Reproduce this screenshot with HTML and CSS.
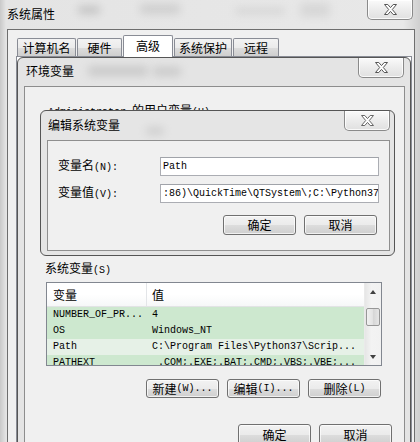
FILE: index.html
```html
<!DOCTYPE html>
<html>
<head>
<meta charset="utf-8">
<title>系统属性</title>
<link rel="stylesheet" href="styles.css">
</head>
<body>
<div class="win win-sys">
  <div class="titlebar sys-title">
    <span class="blur bz1"></span><span class="blur bz2"></span><span class="blur bz3"></span><span class="blur bz4"></span>
    <span class="title">系统属性</span>
    <div class="close close-sys"><svg width="13" height="11" viewBox="0 0 13 11"><polygon points="0.5,0.5 3.8,0.5 6.5,3.6 9.2,0.5 12.5,0.5 8.3,5.5 12.5,10.5 9.2,10.5 6.5,7.4 3.8,10.5 0.5,10.5 4.7,5.5" fill="#fff" stroke="#555" stroke-width="1"/></svg></div>
  </div>
  <div class="client sys-client">
    <div class="tabs">
      <div class="tab t1">计算机名</div>
      <div class="tab t2">硬件</div>
      <div class="tab t3 sel">高级</div>
      <div class="tab t4">系统保护</div>
      <div class="tab t5">远程</div>
    </div>
    <div class="tabpanel"></div>
  </div>
</div>

<div class="win win-env">
  <div class="titlebar env-title">
    <span class="blur bz5"></span><span class="blur bz6"></span>
    <span class="title">环境变量</span>
    <div class="close close-env"><svg width="13" height="11" viewBox="0 0 13 11"><polygon points="0.5,0.5 3.8,0.5 6.5,3.6 9.2,0.5 12.5,0.5 8.3,5.5 12.5,10.5 9.2,10.5 6.5,7.4 3.8,10.5 0.5,10.5 4.7,5.5" fill="#fff" stroke="#555" stroke-width="1"/></svg></div>
  </div>
  <div class="client env-client">
    <div class="uvlabel"><span class="m">Administrator </span>的用户变量<span class="m">(U)</span></div>
    <div class="uvspace"></div>
    <div class="svlabel">系统变量<span class="m">(S)</span></div>
    <div class="listbox">
      <div class="listmain">
        <div class="lhead"><div class="c1">变量</div><div class="c2">值</div></div>
        <div class="lrow g"><div class="c1 m">NUMBER_OF_PR...</div><div class="c2 m">4</div></div>
        <div class="lrow g"><div class="c1 m">OS</div><div class="c2 m">Windows_NT</div></div>
        <div class="lrow w"><div class="c1 m">Path</div><div class="c2 m">C:\Program Files\Python37\Scrip...</div></div>
        <div class="lrow g"><div class="c1 m">PATHEXT</div><div class="c2 m"> .COM;.EXE;.BAT;.CMD;.VBS;.VBE;...</div></div>
      </div>
      <div class="vscroll">
        <div class="sbtn"><span class="arr up"></span></div>
        <div class="strack"><div class="thumb"></div></div>
        <div class="sbtn"><span class="arr down"></span></div>
      </div>
    </div>
    <div class="btnrow r1">
      <div class="btn">新建<span class="m">(W)...</span></div>
      <div class="btn">编辑<span class="m">(I)...</span></div>
      <div class="btn">删除<span class="m">(L)</span></div>
    </div>
    <div class="btnrow r2">
      <div class="btn">确定</div>
      <div class="btn">取消</div>
    </div>
  </div>
</div>

<div class="win win-edit">
  <div class="titlebar edit-title">
    <span class="blur bz7"></span>
    <span class="title">编辑系统变量</span>
    <div class="close close-edit"><svg width="13" height="11" viewBox="0 0 13 11"><polygon points="0.5,0.5 3.8,0.5 6.5,3.6 9.2,0.5 12.5,0.5 8.3,5.5 12.5,10.5 9.2,10.5 6.5,7.4 3.8,10.5 0.5,10.5 4.7,5.5" fill="#fff" stroke="#666" stroke-width="1"/></svg></div>
  </div>
  <div class="client edit-client">
    <div class="frow f1">
      <div class="flabel">变量名<span class="m">(N):</span></div>
      <div class="input m">Path</div>
    </div>
    <div class="frow f2">
      <div class="flabel">变量值<span class="m">(V):</span></div>
      <div class="input m">:86)\QuickTime\QTSystem\;C:\Python37</div>
    </div>
    <div class="btnrow r3">
      <div class="btn">确定</div>
      <div class="btn">取消</div>
    </div>
  </div>
</div>
</body>
</html>
```

FILE: styles.css
```css
* { box-sizing: border-box; }
html, body { margin: 0; padding: 0; }
body {
  width: 420px;
  height: 442px;
  overflow: hidden;
  position: relative;
  background: #e2e2e2;
  font-family: "Noto Sans CJK SC", sans-serif;
  font-size: 12px;
  color: #000;
}
.m { font-family: "Liberation Mono", monospace; font-size: 10px; white-space: pre; }

/* windows */
.win {
  position: absolute;
  display: flex;
  flex-direction: column;
  border: 1px solid #555;
  background: #e6e6e6;
}
.titlebar {
  position: relative;
  flex: none;
  display: flex;
  justify-content: space-between;
  align-items: flex-start;
  overflow: hidden;
}
.title { position: relative; line-height: 16px; white-space: nowrap; }
.blur {
  position: absolute;
  background: #9a9a9a;
  filter: blur(4px);
  opacity: 0.45;
  border-radius: 3px;
}
.close {
  position: relative;
  width: 46px;
  height: 20px;
  border: 1px solid #8a8a8a;
  border-top: none;
  border-radius: 0 0 5px 5px;
  background: linear-gradient(#fafafa, #ececec 50%, #e0e0e0);
  box-shadow: inset 0 0 0 1px rgba(255,255,255,0.8);
  display: flex;
  align-items: center;
  justify-content: center;
}
.close svg { display: block; }
.client {
  flex: 1;
  border: 1px solid #8d8d8d;
  background: #f0f0f0;
  display: flex;
  flex-direction: column;
}

/* outer: 系统属性 */
.win-sys {
  left: 0; top: 0;
  width: 420px; height: 442px;
  border: none;
  background: linear-gradient(90deg, #c9c9c9, #e4e4e4 6px, #e8e8e8 96%, #cfcfcf);
}
.sys-title { height: 29px; padding-left: 7px; }
.sys-title .title { margin-top: 6px; }
.close-sys { margin-right: 7px; }
.bz1 { left: 78px; top: 6px; width: 22px; height: 8px; }
.bz2 { left: 140px; top: 4px; width: 40px; height: 10px; opacity: 0.3; }
.bz3 { left: 235px; top: 8px; width: 50px; height: 6px; opacity: 0.25; }
.bz4 { left: 300px; top: 3px; width: 30px; height: 14px; opacity: 0.2; }
.sys-client {
  margin: 0 5px 0 7px;
  border-color: #6e6e6e;
  border-bottom: none;
}
.tabs {
  display: flex;
  align-items: flex-end;
  height: 21px;
  margin-top: 5px;
  padding-left: 9px;
  gap: 1px;
}
.tab {
  height: 18px;
  border: 1px solid #898c95;
  border-bottom: none;
  background: linear-gradient(#f3f3f3, #ebebeb 50%, #dddddd 51%, #cfcfcf);
  text-align: center;
  line-height: 17px;
  border-radius: 2px 2px 0 0;
}
.t1 { width: 59px; }
.t2 { width: 45px; }
.t3 { width: 50px; }
.t4 { width: 58px; }
.t5 { width: 46px; }
.tab.sel {
  position: relative;
  z-index: 1;
  height: 22px;
  margin-bottom: -1px;
  background: #fff;
  line-height: 20px;
}
.tabpanel {
  flex: 1;
  margin: 0 2px 0 8px;
  border: 1px solid #898c95;
  background: #fff;
}

/* 环境变量 */
.win-env {
  left: 17px; top: 57px;
  width: 394px; height: 420px;
  border-radius: 6px 6px 0 0;
  background: #e4e4e4;
}
.env-title { height: 28px; padding-left: 8px; }
.env-title .title { margin-top: 5px; }
.close-env { margin-right: 6px; }
.bz5 { left: 70px; top: 8px; width: 60px; height: 10px; opacity: 0.35; }
.bz6 { left: 135px; top: 9px; width: 28px; height: 9px; opacity: 0.35; }
.env-client { margin: 0 5px 0 6px; border-bottom: none; }
.uvlabel { margin-top: 15px; padding-left: 23px; line-height: 16px; height: 16px; white-space: nowrap; }
.uvspace { height: 142px; }
.svlabel { padding-left: 20px; line-height: 16px; height: 16px; }
.listbox {
  margin: 6px 0 0 21px;
  width: 336px;
  height: 84px;
  border: 1px solid #828790;
  background: #fff;
  display: flex;
  overflow: hidden;
}
.listmain { flex: 1; overflow: hidden; }
.lhead {
  display: flex;
  height: 24px;
  background: linear-gradient(#ffffff, #ffffff 50%, #f6f7f8);
  border-bottom: 1px solid #e2e3e5;
  line-height: 23px;
}
.lhead .c1 { border-right: 1px solid #e3e5e8; }
.c1 { width: 100px; padding-left: 6px; flex: none; white-space: pre; overflow: hidden; }
.c2 { padding-left: 5px; white-space: pre; overflow: hidden; }
.lrow { display: flex; height: 16px; line-height: 16px; }
.lrow.g { background: #cde8cf; }
.lrow.w { background: #e6f1e7; }
.vscroll {
  width: 17px;
  flex: none;
  display: flex;
  flex-direction: column;
  background: linear-gradient(90deg, #e6e6e6, #f3f3f3 40%, #f1f1f1);
  border-left: 1px solid #eaeaea;
}
.sbtn { height: 17px; display: flex; align-items: center; justify-content: center; flex: none; }
.arr { width: 0; height: 0; border-left: 3.5px solid transparent; border-right: 3.5px solid transparent; }
.arr.up { border-bottom: 4px solid #404040; }
.arr.down { border-top: 4px solid #404040; }
.strack { flex: 1; padding-top: 8px; }
.thumb {
  margin-left: 1px;
  width: 14px;
  height: 18px;
  border: 1px solid #979797;
  border-radius: 2px;
  background: linear-gradient(90deg, #f1f1f1, #e2e2e2 50%, #d6d6d6 51%, #e6e6e6);
}
.btnrow { display: flex; justify-content: flex-end; gap: 8px; }
.r1 { margin-top: 13px; padding-right: 23px; }
.r2 { margin-top: 26px; padding-right: 12px; }
.btn {
  width: 73px;
  height: 19px;
  border: 1px solid #707070;
  border-radius: 3px;
  background: linear-gradient(#f2f2f2, #ebebeb 50%, #dddddd 51%, #cfcfcf);
  box-shadow: inset 0 0 0 1px rgba(255,255,255,0.7);
  display: flex;
  align-items: center;
  justify-content: center;
  line-height: 16px;
  white-space: nowrap;
}
.r2 .btn { height: 21px; }

/* 编辑系统变量 */
.win-edit {
  left: 40px; top: 110px;
  width: 355px; height: 146px;
  border-radius: 6px;
  background: #e5e5e5;
  z-index: 2;
}
.edit-title { height: 29px; padding-left: 7px; }
.edit-title .title { margin-top: 6px; }
.close-edit { margin-right: 4px; }
.bz7 { left: 105px; top: 16px; width: 18px; height: 8px; opacity: 0.3; }
.edit-client { margin: 0 4px 4px 6px; border-color: #8f8f8f; }
.frow { display: flex; align-items: center; height: 19px; }
.f1 { margin-top: 16px; }
.f2 { margin-top: 8px; }
.flabel { width: 112px; padding-left: 10px; line-height: 16px; white-space: nowrap; }
.input {
  width: 219px;
  height: 19px;
  border: 1px solid #abadb3;
  border-top-color: #a0a3a9;
  background: #fff;
  padding-left: 2px;
  line-height: 17px;
  overflow: hidden;
}
.r3 { margin-top: 12px; padding-right: 12px; }
.r3 .btn { height: 20px; }
```
